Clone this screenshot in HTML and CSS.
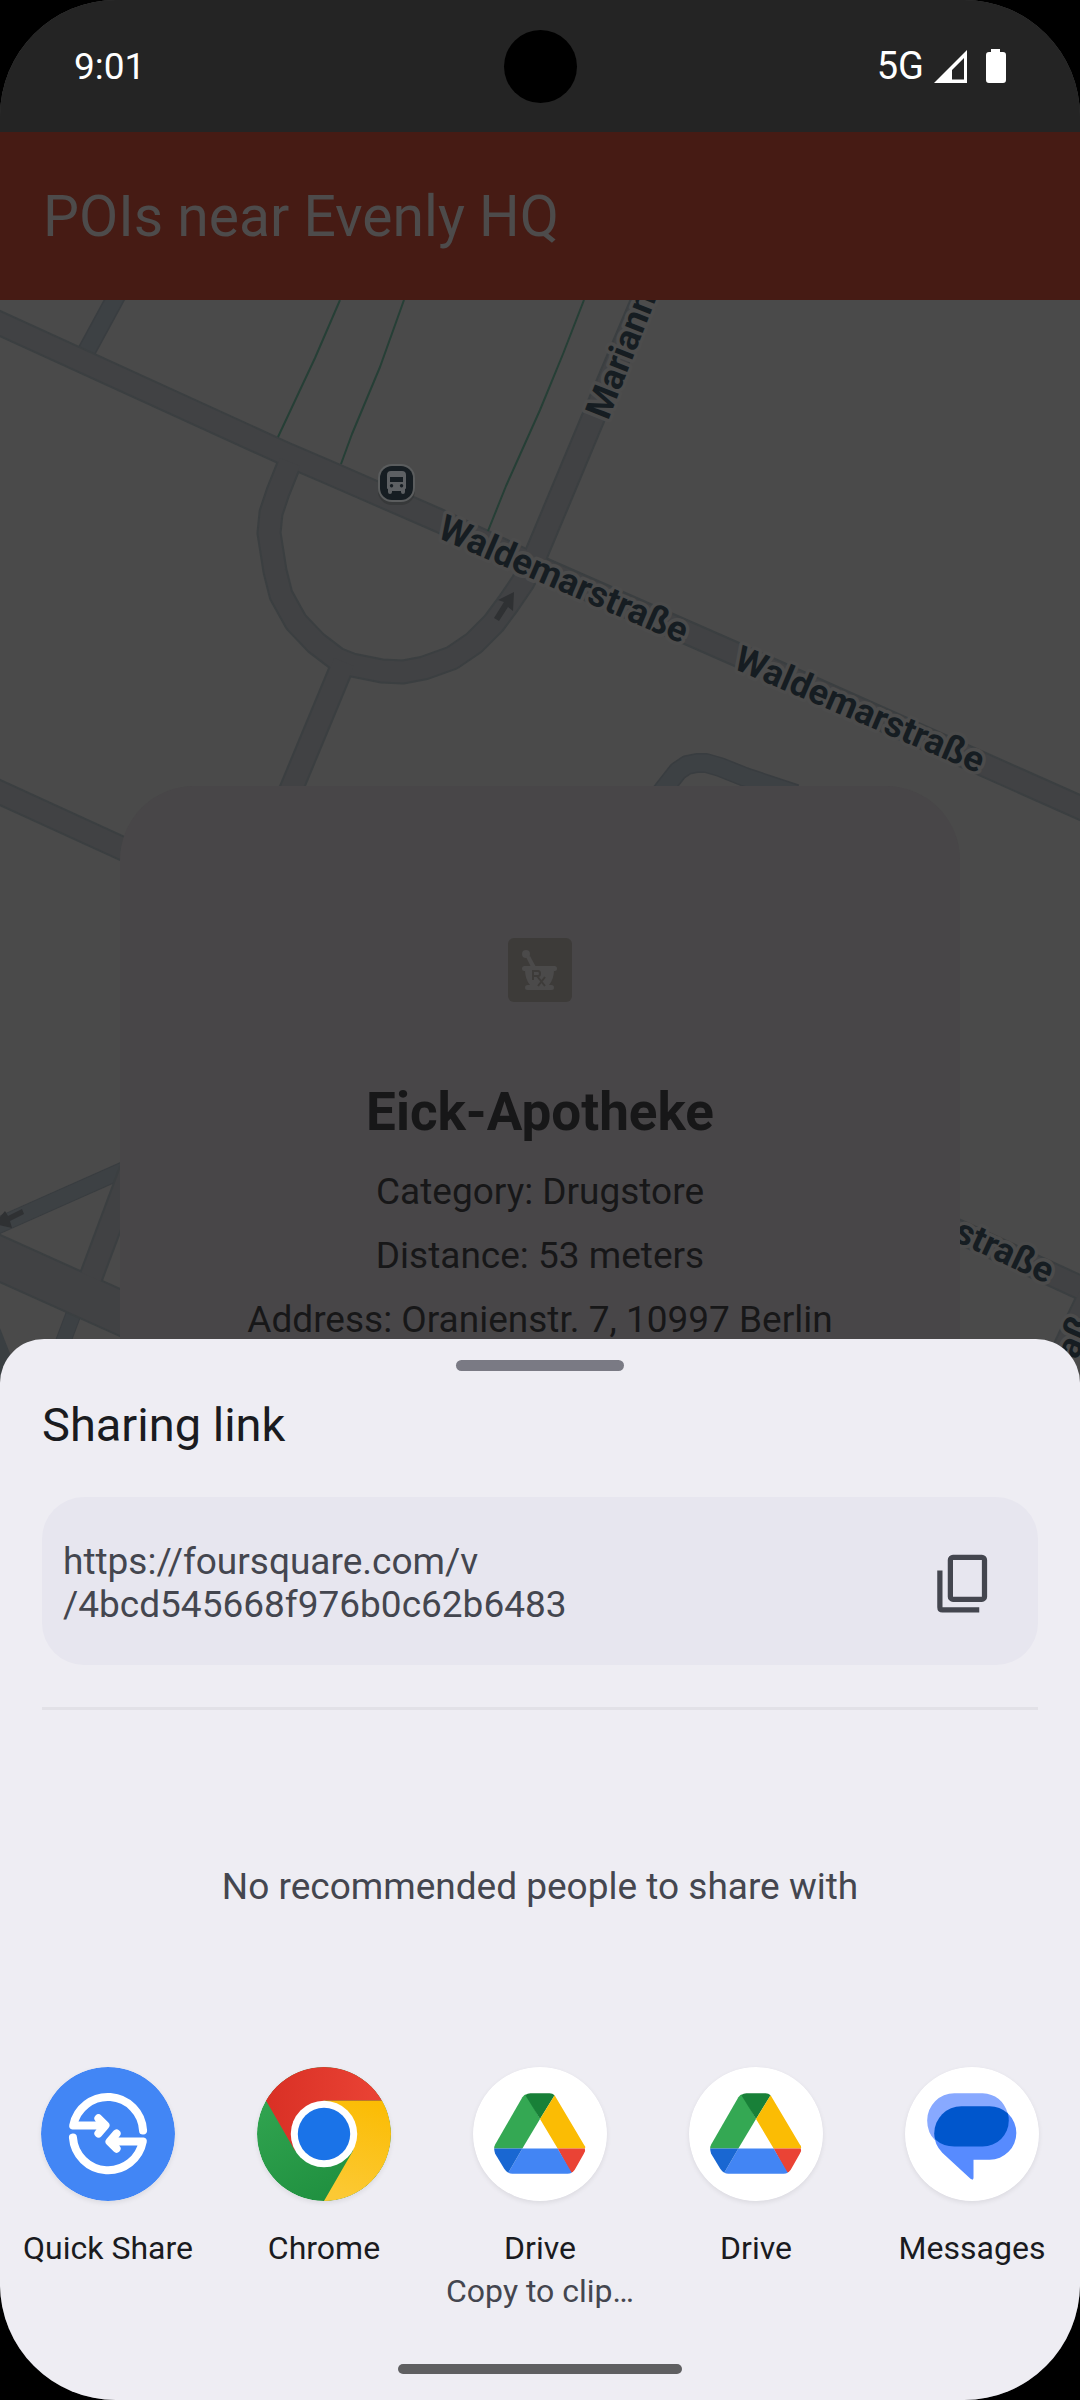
FILE: index.html
```html
<!DOCTYPE html>
<html lang="en">
<head>
<meta charset="utf-8">
<meta name="viewport" content="width=device-width, initial-scale=1">
<title>POIs near Evenly HQ</title>
<link rel="stylesheet" href="styles.css">
</head>
<body>
<div class="phone">
  <div class="status">
    <span class="clock">9:01</span>
    <span class="camera"></span>
    <span class="indicators">
      <span class="network">5G</span>
      <svg class="signal" viewBox="0 0 33 33" aria-hidden="true"><path fill="#fff" fill-rule="evenodd" d="M33 0V33H0ZM30 8L18 20V29.500H30Z"/></svg>
      <svg class="battery" viewBox="0 0 20 34" aria-hidden="true"><path fill="#fff" d="M5 0H14V3H17Q20 3 20 6V31Q20 34 17 34H3Q0 34 0 31V6Q0 3 3 3H5Z"/></svg>
    </span>
  </div>
  <header class="appbar"><h1>POIs near Evenly HQ</h1></header>
  <main class="content">
    <svg class="map" viewBox="0 300 1080 1100" preserveAspectRatio="xMidYMin slice" role="img" aria-label="Map">
      <defs>
        <path id="side" d="M117 295L85 354"/>
        <path id="court" d="M660 794L678 771L687 765L697 763L706 763L720 767L745 777L796 794"/>
        <path id="diag" d="M130 1167L-5 1227"/>
        <path id="lane" d="M75 1310L60 1350"/>
        <path id="main" d="M-10 319L288 455L330 473L440 521L540 568L738 655L1090 812"/>
        <path id="loop" d="M290 462L278 492L271 513L269 533L275 571L281 595L296 622L316 643L337 659L352 665L382 671L403 672L424 668L452 658L474 643L494 623L508 604L523 582L535 557L553 514L594 416L645 295"/>
        <path id="stem" d="M344 662L290 792"/>
        <path id="west" d="M-10 788L130 852"/>
        <path id="big" d="M-10 1254L130 1317"/>
        <path id="cross" d="M131 1170L88 1285"/>
        <path id="east" d="M940 1223L1090 1292"/>
        <path id="south" d="M1092 1290L1040 1400"/>
      </defs>
      <g class="minor-edge"><use href="#side" stroke-width="19"/><use href="#court" stroke-width="20"/><use href="#diag" stroke-width="17"/><use href="#lane" stroke-width="16"/></g>
      <g class="minor"><use href="#side" stroke-width="16"/><use href="#court" stroke-width="17"/><use href="#diag" stroke-width="15"/><use href="#lane" stroke-width="14"/></g>
      <path class="minor-fill" d="M0 1328L11 1356L0 1380Z"/>
      <g class="road-edge"><use href="#main"/><use href="#loop"/><use href="#stem"/><use href="#west"/><use href="#cross"/><use href="#east"/><use href="#south"/><use href="#big"/></g>
      <g class="road"><use href="#main"/><use href="#loop"/><use href="#stem"/><use href="#west"/><use href="#cross"/><use href="#east"/><use href="#south"/><use href="#big"/></g>
      <g class="trail"><path d="M340 300L315 358L278 437"/><path d="M404 300L380 367L352 434L341 464"/><path d="M584 300L563 354L540 410L506 486L488 531"/></g>
      <path class="arrow" d="M494 618L504 602L498 600L514 592L513 611L508 607L499 621Z"/>
      <path class="arrow" d="M22 1209L8 1216L5 1211L-6 1224L12 1228L10 1221L24 1214Z"/>
      <rect x="378" y="466" width="37" height="39" rx="14" fill="#2e2f30" opacity=".5"/>
      <rect x="378" y="464" width="37" height="38" rx="14" fill="#5b5d5e"/>
      <rect x="380" y="466" width="33" height="34" rx="12" fill="#161d22"/>
      <path fill="#5d6063" fill-rule="evenodd" d="M391 471h11q4 0 4 4v13q0 1-1 1v3q0 2-2 2t-2-2v-1h-9v1q0 2-2 2t-2-2v-3q-1 0-1-1v-13q0-4 4-4zM390 477v5h13v-5zM391.500 484a1.700 1.700 0 1 0 .1 0zM401.500 484a1.700 1.700 0 1 0 .1 0z"/>
      <g class="street">
        <text transform="translate(436 537) rotate(23.500)">Waldemarstraße</text>
        <text transform="translate(732 668) rotate(23.200)">Waldemarstraße</text>
        <text transform="translate(608 421) rotate(-68.500)">Mariann</text>
        <text text-anchor="end" transform="translate(1047 1284) rotate(25)">Oranienstraße</text>
        <text text-anchor="end" transform="translate(1094 1322) rotate(-66)">Adalbertstraß</text>
      </g>
    </svg>
    <article class="poi">
      <svg class="poi-icon" viewBox="0 0 64 64" aria-hidden="true">
        <rect width="64" height="64" rx="6" fill="#3d3b39"/>
        <g fill="#4b4a4a"><circle cx="18" cy="16" r="4"/><path d="M18 19l4-1 6 11h-5z"/><rect x="14" y="28" width="35" height="5" rx="2.500"/><path d="M17 32H46Q46 41 41 47H22Q17 41 17 32Z"/><rect x="17" y="47" width="29" height="5" rx="2.500"/></g>
        <path d="M25 42V33H30Q32 33 32 35.500T30 38H25M29 38L37 48M37 39L30 48" fill="none" stroke="#3d3b39" stroke-width="2"/>
      </svg>
      <h2>Eick-Apotheke</h2>
      <p>Category: Drugstore</p>
      <p>Distance: 53 meters</p>
      <p>Address: Oranienstr. 7, 10997 Berlin</p>
    </article>
  </main>
  <section class="sheet" aria-label="Share">
    <div class="handle"></div>
    <h2 class="sheet-title">Sharing link</h2>
    <div class="link-box">
      <p>https://foursquare.com/v<br>/4bcd545668f976b0c62b6483</p>
      <button type="button" class="copy" aria-label="Copy link">
        <svg viewBox="0 0 24 24" fill="none" stroke="#44464f" stroke-width="2" aria-hidden="true"><rect x="7" y="2" width="13" height="16" rx="1"/><path d="M3 7V21Q3 22 4 22H18"/></svg>
      </button>
    </div>
    <hr>
    <p class="empty">No recommended people to share with</p>
    <div class="apps">
      <button type="button" class="app">
        <svg viewBox="0 0 133 133" aria-hidden="true"><circle cx="66.500" cy="66.500" r="66.500" fill="#4286f5"/><g fill="none" stroke="#fff" stroke-width="8" stroke-linecap="round" stroke-linejoin="round"><path d="M101.300 63A35 35 0 0 0 32 58H63M57 51L64 58L57 66M31.700 70A35 35 0 0 0 101 74H69M75 66L68 74L75 81"/></g></svg>
        <span class="name">Quick Share</span>
      </button>
      <button type="button" class="app">
        <svg viewBox="0 0 133 133" aria-hidden="true">
          <defs>
            <linearGradient id="cr" x1="0" x2="1"><stop offset="0" stop-color="#d93025"/><stop offset="1" stop-color="#ea4335"/></linearGradient>
            <linearGradient id="cy" x1=".5" y1="1" x2=".7" y2="0"><stop offset="0" stop-color="#fcc934"/><stop offset="1" stop-color="#fbbc04"/></linearGradient>
            <linearGradient id="cg" x1=".7" y1="1" x2=".1" y2="0"><stop offset="0" stop-color="#1e8e3e"/><stop offset="1" stop-color="#34a853"/></linearGradient>
          </defs>
          <circle cx="66.500" cy="66.500" r="66.500" fill="url(#cg)"/>
          <path fill="url(#cy)" d="M66.500 33.250H124.090A66.500 66.500 0 0 1 66.500 133L95.290 83.130Z"/>
          <path fill="url(#cr)" d="M8.910 33.250A66.500 66.500 0 0 1 124.090 33.250H66.500L37.700 83.130Z"/>
          <circle cx="66.500" cy="66.500" r="33" fill="#fff"/><circle cx="66.500" cy="66.500" r="26" fill="#1a73e8"/>
        </svg>
        <span class="name">Chrome</span>
      </button>
      <button type="button" class="app">
        <svg viewBox="0 0 133 133" aria-hidden="true">
          <defs><g id="drive"><circle cx="66.500" cy="66.500" r="66.500" fill="#fff"/><path fill="#34a853" d="M53 27L66.500 51.500L49 81H21Q21 79 22 77L49 30Q51 27 53 27Z"/><path fill="#188038" d="M52 28Q54 26 57 26H76Q79 26 81 28L66.500 51.500Z"/><path fill="#fbbc04" d="M81 28L110 77Q112 79 111 81H84L66.500 51.500Z"/><path fill="#ea4335" d="M84 81H111Q112 83 110 86L101 102Q99 105 97 105Z"/><path fill="#4285f4" d="M49 81H84L98 105Q96 106 94 106H39Q37 106 35 105Z"/><path fill="#1967d2" d="M21 81H49L35 105Q33 104 31 101L22 86Q21 83 21 81Z"/></g></defs>
          <use href="#drive"/>
        </svg>
        <span class="name">Drive</span>
        <span class="hint">Copy to clip…</span>
      </button>
      <button type="button" class="app">
        <svg viewBox="0 0 133 133" aria-hidden="true"><use href="#drive"/></svg>
        <span class="name">Drive</span>
      </button>
      <button type="button" class="app">
        <svg viewBox="0 0 133 133" aria-hidden="true"><circle cx="66.500" cy="66.500" r="66.500" fill="#fff"/><path fill="#578bff" d="M56 39H84A26.500 26.500 0 0 1 84 92H68V110Q68 113 65 111L37 85Q29 77 29 66A27 27 0 0 1 56 39Z"/><path fill="#88a9ff" d="M49 26H77Q96 27 102 46L60 60L30 73Q22 65 22 53A27 27 0 0 1 49 26Z"/><path fill="#0056cc" d="M56 39H84Q94 39 102 46Q103 49 103 53A26 26 0 0 1 77 79H49Q38 79 30 72Q29 69 29 66A27 27 0 0 1 56 39Z"/></svg>
        <span class="name">Messages</span>
      </button>
    </div>
    <div class="nav-pill"></div>
  </section>
</div>
</body>
</html>
```
FILE: styles.css
```css
* { box-sizing: border-box; }
body { margin: 0; background: #000; font-family: Roboto, "Noto Sans", sans-serif; }
h1, h2, p { margin: 0; font-weight: 400; }
button { border: 0; padding: 0; background: none; font: inherit; color: inherit; }

.phone {
  min-height: 100vh;
  display: flex;
  flex-direction: column;
  overflow: hidden;
  border-radius: 116px;
  background: #4a4a4a;
}

.status {
  display: grid;
  grid-template-columns: 1fr auto 1fr;
  align-items: center;
  height: 132px;
  padding: 0 74px;
  background: #242424;
  color: #fff;
  font-size: 37px;
}
.camera { width: 73px; height: 73px; border-radius: 50%; background: #000; }
.indicators { display: flex; justify-content: flex-end; align-items: center; gap: 10px; }
.network { font-size: 38px; }
.signal { width: 33px; height: 33px; }
.battery { width: 20px; height: 34px; margin-left: 9px; }

.appbar {
  display: flex;
  align-items: center;
  height: 168px;
  padding: 0 43px;
  background: #461b14;
  color: #4d4b4b;
}
.appbar h1 { font-size: 57px; }

/* The sheet overlaps the bottom of the map by its corner radius */
.content {
  position: relative;
  flex: 1;
  display: flex;
  justify-content: center;
  padding: 486px 120px 0;
  overflow: hidden;
  margin-bottom: -60px;
}
.map { position: absolute; inset: 0; width: 100%; height: 100%; }
.minor, .minor-edge, .road, .road-edge, .trail { fill: none; stroke-linejoin: round; }
.minor { stroke: #3d4144; }
.minor-edge { stroke: #393d40; }
.minor-fill { fill: #3a3f42; }
.road { stroke: #414244; stroke-width: 21px; }
.road-edge { stroke: #3b3f41; stroke-width: 25px; }
.road use[href="#big"] { stroke-width: 41px; }
.road-edge use[href="#big"] { stroke-width: 45px; }
.trail { stroke: #263f36; stroke-width: 2px; }
.arrow { fill: #2f3133; }
.street {
  font-size: 36px;
  font-weight: 700;
  fill: #161d22;
  stroke: #4c4c4c;
  stroke-width: 7px;
  stroke-linejoin: round;
  paint-order: stroke;
}

.poi {
  position: relative;
  flex: 1;
  display: flex;
  flex-direction: column;
  align-items: center;
  padding-top: 152px;
  border-radius: 74px 74px 0 0;
  background: #484648;
  color: #171718;
}
.poi-icon { width: 64px; height: 64px; margin-bottom: 76px; }
.poi h2 { margin-bottom: 14px; font-size: 53px; line-height: 68px; font-weight: 700; }
.poi p { font-size: 37px; line-height: 64px; }

.sheet {
  position: relative;
  display: flex;
  flex-direction: column;
  padding: 21px 0 26px;
  border-radius: 44px 44px 0 0;
  background: #eeedf3;
  color: #1a1b20;
}
.handle { align-self: center; width: 168px; height: 11px; border-radius: 6px; background: #7a7a84; }
.sheet-title { margin: 26px 42px 0; font-size: 47px; line-height: 56px; }
.link-box {
  display: flex;
  justify-content: space-between;
  align-items: center;
  margin: 44px 42px 0;
  padding: 43px 43px 39px 21px;
  border-radius: 42px;
  background: #e7e6ef;
  color: #44464f;
  font-size: 37px;
  line-height: 43px;
}
.copy, .copy svg { display: block; width: 63px; height: 63px; }
hr { width: auto; height: 3px; margin: 42px 42px 0; border: 0; background: #e2e1e7; }
.empty { margin-top: 155px; text-align: center; font-size: 37px; line-height: 44px; color: #44464f; }
.apps { display: grid; grid-template-columns: repeat(5, 1fr); margin-top: 158px; }
.app { display: flex; flex-direction: column; align-items: center; font-size: 32px; line-height: 43px; }
.app svg { width: 134px; height: 134px; margin-bottom: 26px; border-radius: 50%; box-shadow: 0 2px 5px #00000014; }
.hint { color: #44464f; }
.nav-pill { align-self: center; width: 284px; height: 10px; margin-top: 51px; border-radius: 5px; background: #5f5f61; }
```
